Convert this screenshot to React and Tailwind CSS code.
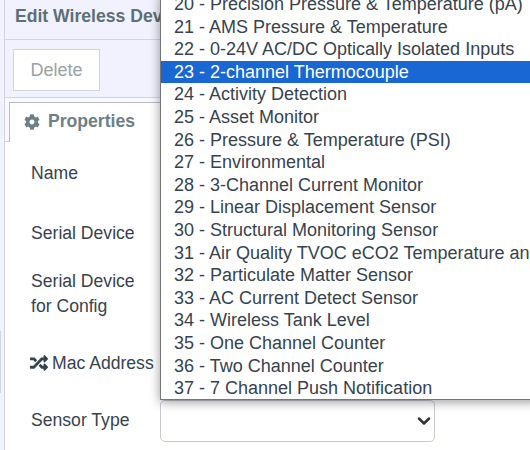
import React from 'react';
import { ChevronDown } from 'lucide-react';

const sensorTypes = [
  '20 - Precision Pressure & Temperature (pA)',
  '21 - AMS Pressure & Temperature',
  '22 - 0-24V AC/DC Optically Isolated Inputs',
  '23 - 2-channel Thermocouple',
  '24 - Activity Detection',
  '25 - Asset Monitor',
  '26 - Pressure & Temperature (PSI)',
  '27 - Environmental',
  '28 - 3-Channel Current Monitor',
  '29 - Linear Displacement Sensor',
  '30 - Structural Monitoring Sensor',
  '31 - Air Quality TVOC eCO2 Temperature and Humidity',
  '32 - Particulate Matter Sensor',
  '33 - AC Current Detect Sensor',
  '34 - Wireless Tank Level',
  '35 - One Channel Counter',
  '36 - Two Channel Counter',
  '37 - 7 Channel Push Notification',
];

function GearIcon() {
  return (
    <svg viewBox="0 0 512 512" className="w-[16px] h-[16px] fill-[#6c8088]">
      <path d="M487.4 315.7l-42.6-24.6c4.3-23.2 4.3-47 0-70.2l42.6-24.6c4.9-2.8 7.1-8.6 5.5-14-11.1-35.6-30-67.8-54.7-94.6-3.8-4.1-10-5.1-14.8-2.3L380.8 110c-17.9-15.4-38.5-27.3-60.8-35.1V25.8c0-5.6-3.9-10.5-9.4-11.7-36.7-8.2-74.3-7.8-109.2 0-5.5 1.2-9.4 6.1-9.4 11.7V75c-22.2 7.9-42.8 19.8-60.8 35.1L88.7 85.5c-4.9-2.8-11-1.9-14.8 2.3-24.7 26.7-43.6 58.9-54.7 94.6-1.7 5.4.6 11.2 5.5 14L67.3 221c-4.3 23.2-4.3 47 0 70.2l-42.6 24.6c-4.9 2.8-7.1 8.6-5.5 14 11.1 35.6 30 67.8 54.7 94.6 3.8 4.1 10 5.1 14.8 2.3l42.6-24.6c17.9 15.4 38.5 27.3 60.8 35.1v49.2c0 5.6 3.9 10.5 9.4 11.7 36.7 8.2 74.3 7.8 109.2 0 5.5-1.2 9.4-6.1 9.4-11.7v-49.2c22.2-7.9 42.8-19.8 60.8-35.1l42.6 24.6c4.9 2.8 11 1.9 14.8-2.3 24.7-26.7 43.6-58.9 54.7-94.6 1.5-5.5-.7-11.3-5.6-14.1zM256 336c-44.1 0-80-35.9-80-80s35.9-80 80-80 80 35.9 80 80-35.9 80-80 80z" />
    </svg>
  );
}

function RandomIcon() {
  return (
    <svg viewBox="0 0 512 512" className="w-[18px] h-[18px] -ml-[1px] fill-[#36434f]">
      <path d="M504.971 359.029c9.373 9.373 9.373 24.569 0 33.941l-80 79.984c-15.01 15.01-40.971 4.49-40.971-16.971V416h-58.785a12.004 12.004 0 0 1-8.773-3.812l-70.556-75.596 53.333-57.143L352 336h32v-39.981c0-21.438 25.943-31.998 40.971-16.971l80 79.981zM12 176h84l52.781 56.551 53.333-57.143-70.556-75.596A11.999 11.999 0 0 0 122.785 96H12c-6.627 0-12 5.373-12 12v56c0 6.627 5.373 12 12 12zm372 0v39.984c0 21.46 25.961 31.98 40.971 16.971l80-79.984c9.373-9.373 9.373-24.569 0-33.941l-80-79.981C409.943 24.021 384 34.582 384 56.019V96h-58.785a12.004 12.004 0 0 0-8.773 3.812L96 336H12c-6.627 0-12 5.373-12 12v56c0 6.627 5.373 12 12 12h110.785c3.326 0 6.503-1.381 8.773-3.812L352 176h32z" />
    </svg>
  );
}

function FormRow({ className, children }) {
  return (
    <div className={`flex items-center text-[17.6px] leading-[25px] text-[#36434f] ${className}`}>
      {children}
    </div>
  );
}

export default function App() {
  return (
    <div className="relative w-[530px] h-[450px] overflow-hidden bg-white font-['Liberation_Sans',sans-serif]">
      <div className="flex h-full">
        <div className="w-[4px] shrink-0 bg-[#f1f2fd]" />
        <div className="flex-1 border-l border-[#d3d5de]">
          <div className="h-[40px] bg-[#f1f2fd] border-b border-[#d3d5de] pl-[10px] pt-[6px] text-[17.6px] leading-[20px] font-bold text-[#5d6f78]">
            Edit Wireless Device
          </div>
          <div className="h-[58px] bg-[#f1f2fd] border-b border-[#d3d5de] pl-[8px] pt-[9px]">
            <button className="w-[87px] h-[42px] bg-white border border-[#d3d5de] text-[18px] text-[#98a2a8]">
              Delete
            </button>
          </div>
          <div className="h-[44px] pl-[4px] pt-[4px] bg-[#f8f9fe] border-b border-[#d3d5de]">
            <div className="h-[40px] w-[200px] pb-[2px] bg-white border-t border-l border-[#b8bbc4] flex items-center gap-[8px] pl-[14px] text-[17.6px] font-bold text-[#6c8088]">
              <GearIcon />
              Properties
            </div>
          </div>
          <div className="pl-[26px]">
            <FormRow className="h-[62px]">Name</FormRow>
            <FormRow className="h-[58px]">Serial Device</FormRow>
            <FormRow className="h-[64px]">
              <div>Serial Device<br />for Config</div>
            </FormRow>
            <FormRow className="h-[72px] pt-[2px] gap-[4px]">
              <RandomIcon />
              Mac Address
            </FormRow>
            <FormRow className="h-[45px]">
              <span className="w-[129px] shrink-0">Sensor Type</span>
              <div className="w-[275px] h-[42px] bg-white border border-[#c8cad4] rounded-[5px] flex items-center justify-end">
                <ChevronDown size={20} strokeWidth={3} className="text-[#333]" />
              </div>
            </FormRow>
          </div>
        </div>
      </div>

      <div className="absolute left-0 top-[331px] w-[1px] h-[62px] bg-[#d3d5de]" />

      <div className="absolute left-[160px] top-[-8px] w-[380px] h-[408px] overflow-hidden bg-white border border-[#767676] shadow-[0_2px_10px_rgba(0,0,0,0.4)]">
        {sensorTypes.map((s) => (
          <div
            key={s}
            className={`h-[22.6px] leading-[22.6px] pl-[13px] text-[18px] whitespace-nowrap ${
              s.startsWith('23') ? 'bg-[#1967d2] text-white' : 'text-[#36434f]'
            }`}
          >
            {s}
          </div>
        ))}
      </div>
    </div>
  );
}
